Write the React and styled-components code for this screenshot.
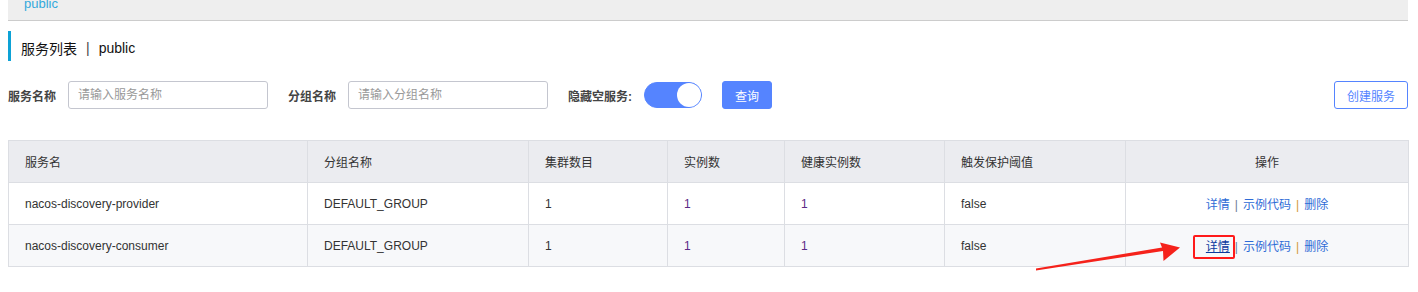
import styled, { createGlobalStyle } from 'styled-components'

const GlobalStyle = createGlobalStyle`
body {
    margin: 0;
    background: #fff;
    font-family: "Liberation Sans", "Noto Sans CJK SC", sans-serif;
    font-size: 12px;
    color: #333;
}
`

const Page = styled.div`
position: relative;
padding: 0 10px 0 8px;
height: 292px;
overflow: hidden;
`

const TopBar = styled.div`
height: 20px;
background: #eeeeee;
border-bottom: 1px solid #cccccc;
overflow: hidden;
display: flex;
align-items: flex-end;
padding-left: 16px;
`

const TopText = styled.span`
color: #33a9dc;
font-size: 13px;
line-height: 13px;
margin-bottom: 10px;
`

const Title = styled.div`
margin-top: 10px;
height: 30px;
border-left: 3px solid #0da2d6;
display: flex;
align-items: center;
padding-left: 10px;
padding-top: 4px;
box-sizing: border-box;
font-size: 14px;
color: #111;
`

const Divider = styled.span`
margin: 0 9px;
color: #444;
`

const FilterRow = styled.div`
margin-top: 20px;
height: 28px;
display: flex;
align-items: center;
`

const Label = styled.span`
font-weight: bold;
color: #444;
margin-right: 12px;
`

const Input = styled.input`
width: 200px;
height: 28px;
box-sizing: border-box;
border: 1px solid #c4c6cf;
border-radius: 3px;
padding: 0 9px;
font-family: inherit;
font-size: 12px;
margin-right: 20px;
outline: none;
&::placeholder {
    color: #999;
}
`

const Switch = styled.div`
width: 58px;
height: 26px;
box-sizing: border-box;
border-radius: 13px;
background: #5584ff;
border: 1px solid #5584ff;
display: flex;
justify-content: flex-end;
align-items: center;
margin-right: 20px;
`

const Knob = styled.div`
width: 24px;
height: 24px;
border-radius: 50%;
background: #fff;
`

const Button = styled.button`
height: 28px;
box-sizing: border-box;
padding: 0 12px;
border-radius: 3px;
font-family: inherit;
font-size: 12px;
cursor: pointer;
border: 1px solid #5584ff;
background: ${p => (p.$primary ? '#5584ff' : '#fff')};
color: ${p => (p.$primary ? '#fff' : '#5584ff')};
`

const Spacer = styled.div`
flex: 1;
`

const Table = styled.table`
margin-top: 31px;
width: 1400px;
border-collapse: collapse;
table-layout: fixed;
`

const Th = styled.th`
height: 41px;
background: #ebecf0;
border: 1px solid #dcdee3;
font-weight: normal;
text-align: ${p => p.$align || 'left'};
padding: 0 16px;
color: #333;
`

const Tr = styled.tr`
background: ${p => (p.$alt ? '#f7f8fa' : '#fff')};
`

const Td = styled.td`
height: 41px;
border: 1px solid #dcdee3;
padding: 0 16px;
text-align: ${p => p.$align || 'left'};
color: ${p => p.$color || '#333'};
`

const Link = styled.a`
position: relative;
color: ${p => (p.$active ? '#0b3a9e' : '#2e6bd6')};
text-decoration: ${p => (p.$active ? 'underline' : 'none')};
cursor: pointer;
${p => p.$boxed && `
    &::after {
        content: '';
        position: absolute;
        left: -13px;
        right: -5px;
        top: 50%;
        height: 24px;
        margin-top: -12px;
        box-sizing: border-box;
        border: 2.5px solid #ff1a1a;
        border-radius: 2px;
    }
`}
`

const Sep = styled.span`
margin: 0 5px;
color: ${p => p.$color};
`

const Arrow = styled.svg`
position: absolute;
left: 0;
top: 0;
pointer-events: none;
`

const columns = [
    { title: '服务名', width: 299 },
    { title: '分组名称', width: 221 },
    { title: '集群数目', width: 139 },
    { title: '实例数', width: 117 },
    { title: '健康实例数', width: 160 },
    { title: '触发保护阈值', width: 181 },
    { title: '操作', width: 283, align: 'center' },
]

const services = [
    { name: 'nacos-discovery-provider', group: 'DEFAULT_GROUP', clusters: 1, ips: 1, healthy: 1, threshold: 'false' },
    { name: 'nacos-discovery-consumer', group: 'DEFAULT_GROUP', clusters: 1, ips: 1, healthy: 1, threshold: 'false' },
]

function App() {
    return (
        <Page>
            <GlobalStyle />
            <TopBar>
                <TopText>public</TopText>
            </TopBar>
            <Title>
                服务列表<Divider>|</Divider>public
            </Title>
            <FilterRow>
                <Label>服务名称</Label>
                <Input placeholder="请输入服务名称" />
                <Label>分组名称</Label>
                <Input placeholder="请输入分组名称" />
                <Label>隐藏空服务:</Label>
                <Switch>
                    <Knob />
                </Switch>
                <Button $primary>查询</Button>
                <Spacer />
                <Button>创建服务</Button>
            </FilterRow>
            <Table>
                <colgroup>
                    {columns.map(col => (
                        <col key={col.title} style={{ width: col.width }} />
                    ))}
                </colgroup>
                <thead>
                    <tr>
                        {columns.map(col => (
                            <Th key={col.title} $align={col.align}>{col.title}</Th>
                        ))}
                    </tr>
                </thead>
                <tbody>
                    {services.map((s, i) => (
                        <Tr key={s.name} $alt={i % 2 === 1}>
                            <Td>{s.name}</Td>
                            <Td>{s.group}</Td>
                            <Td>{s.clusters}</Td>
                            <Td $color="#5b2a86">{s.ips}</Td>
                            <Td $color="#5b2a86">{s.healthy}</Td>
                            <Td>{s.threshold}</Td>
                            <Td $align="center">
                                <Link $active={i === 1} $boxed={i === 1}>详情</Link>
                                <Sep $color="#6b7a99">|</Sep>
                                <Link>示例代码</Link>
                                <Sep $color="#d39a3a">|</Sep>
                                <Link>删除</Link>
                            </Td>
                        </Tr>
                    ))}
                </tbody>
            </Table>
            <Arrow width="1418" height="292">
                <polygon
                    points="1036,270.5 1163,251 1163.5,261 1180,247.5 1160,242.5 1162,247.5 1036,268.5"
                    fill="#f5221b"
                />
            </Arrow>
        </Page>
    )
}

export default App
